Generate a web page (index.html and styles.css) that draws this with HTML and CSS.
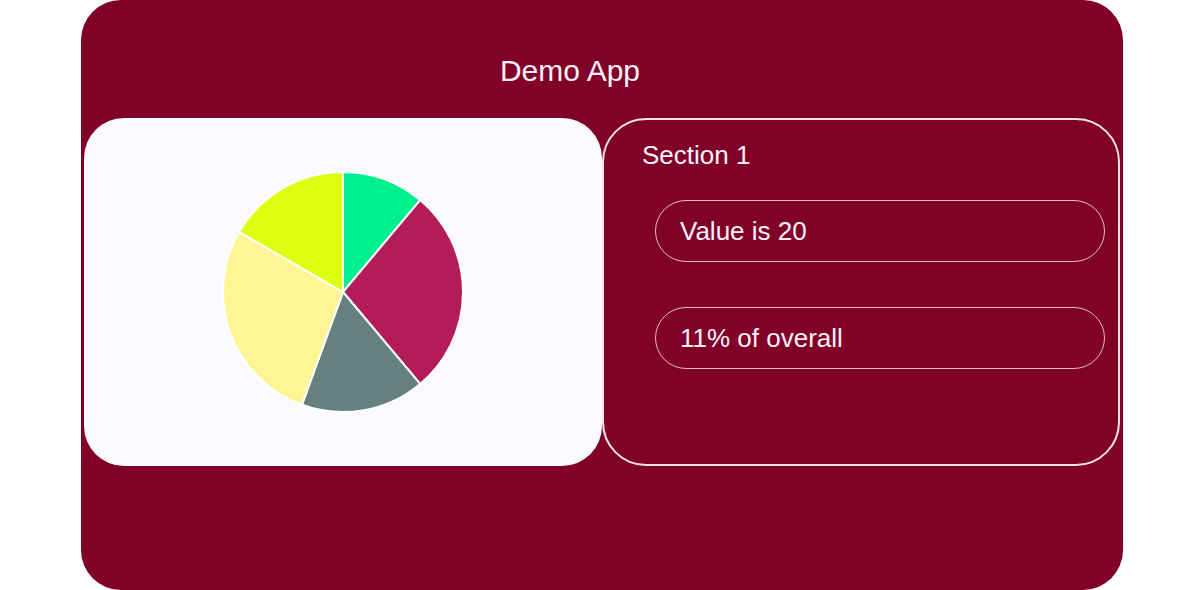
FILE: index.html
```html
<!DOCTYPE html>
<html lang="en">
<head>
<meta charset="utf-8">
<title>Demo App</title>
<link rel="stylesheet" href="styles.css">
</head>
<body>
<div class="app">
  <header class="app-header">Demo App</header>
  <div class="cards">
    <div class="card chart-card">
      <svg class="pie" width="244" height="244" viewBox="-122 -122 244 244" aria-hidden="true">
        <g stroke="#ffffff" stroke-width="2" stroke-linejoin="round">
          <path fill="#00f090" d="M0 0 L0 -120 A120 120 0 0 1 77.13 -91.93 Z"/>
          <path fill="#b31b59" d="M0 0 L77.13 -91.93 A120 120 0 0 1 77.13 91.93 Z"/>
          <path fill="#668080" d="M0 0 L77.13 91.93 A120 120 0 0 1 -41.04 112.76 Z"/>
          <path fill="#fff594" d="M0 0 L-41.04 112.76 A120 120 0 0 1 -103.92 -60 Z"/>
          <path fill="#dcff10" d="M0 0 L-103.92 -60 A120 120 0 0 1 0 -120 Z"/>
        </g>
      </svg>
    </div>
    <div class="card info-card">
      <div class="section-title">Section 1</div>
      <div class="pill">Value is 20</div>
      <div class="pill">11% of overall</div>
    </div>
  </div>
</div>
</body>
</html>
```
FILE: styles.css
```css
* { box-sizing: border-box; }
html, body { margin: 0; padding: 0; background: #ffffff; }
body {
  font-family: "Liberation Sans", Arial, sans-serif;
  color: #fdf2fb;
  overflow: hidden;
}
.app {
  width: 1042px;
  height: 590px;
  margin-left: 81px;
  background: #810027;
  border-radius: 40px;
  padding: 0 3px;
  display: flex;
  flex-direction: column;
}
.app-header {
  height: 118px;
  display: flex;
  align-items: center;
  justify-content: center;
  padding: 24px 64px 0 0;
  font-size: 30px;
  line-height: 34px;
}
.cards {
  display: flex;
  height: 348px;
}
.card {
  border-radius: 40px;
  height: 348px;
  flex: none;
}
.chart-card {
  width: 518px;
  background: #fbfaff;
  display: flex;
  align-items: center;
  justify-content: center;
}
.pie { display: block; }
.info-card {
  width: 518px;
  border: 2px solid #f6e4eb;
  border-radius: 44px;
  padding: 20px 13px 0 38px;
  display: flex;
  flex-direction: column;
}
.section-title {
  font-size: 26px;
  line-height: 30px;
  margin-bottom: 30px;
}
.pill {
  margin-left: 13px;
  height: 62px;
  border: 1px solid #e8bcca;
  border-radius: 31px;
  padding: 0 24px;
  display: flex;
  align-items: center;
  font-size: 26px;
  line-height: 30px;
  margin-bottom: 45px;
}
```
